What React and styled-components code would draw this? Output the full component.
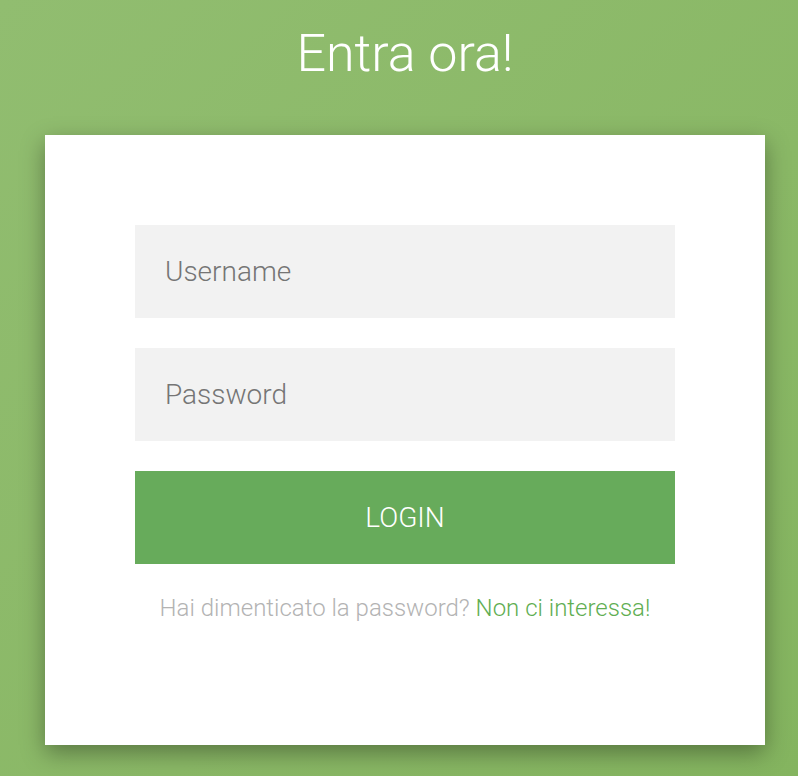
import React from 'react'
import styled, { createGlobalStyle } from 'styled-components'

const GlobalStyle = createGlobalStyle`
  html, body {
    margin: 0;
    padding: 0;
  }
  body {
    font-family: Roboto, "Liberation Sans", sans-serif;
    background: linear-gradient(135deg, #91bd70 0%, #8ab866 60%, #84b45f 100%);
    min-height: 776px;
  }
`

export default function App() {
  return (
    <>
      <GlobalStyle />
      <Page>
        <Title>Entra ora!</Title>
        <Card>
          <Form onSubmit={(e) => e.preventDefault()}>
            <Input type="text" placeholder="Username" />
            <Input type="password" placeholder="Password" />
            <Button type="submit">LOGIN</Button>
            <Message>
              Hai dimenticato la password? <Link href="#">Non ci interessa!</Link>
            </Message>
          </Form>
        </Card>
      </Page>
    </>
  )
}

const Page = styled.main`
  display: flex;
  flex-direction: column;
  align-items: center;
  padding-top: 25px;
  padding-left: 12px;
`

const Title = styled.h1`
  margin: 0;
  color: #fff;
  font-size: 52px;
  font-weight: 300;
  line-height: 58px;
`

const Card = styled.section`
  box-sizing: border-box;
  width: 720px;
  height: 610px;
  margin-top: 52px;
  background: #fff;
  padding: 90px;
  box-shadow: 0 8px 22px rgba(0, 0, 0, 0.35);
`

const Form = styled.form`
  display: flex;
  flex-direction: column;
  gap: 30px;
`

const Input = styled.input`
  box-sizing: border-box;
  width: 100%;
  height: 93px;
  border: none;
  outline: none;
  background: #f2f2f2;
  padding: 0 30px;
  font-family: Roboto, "Liberation Sans", sans-serif;
  font-size: 28px;
  font-weight: 300;
  color: #555;

  &::placeholder {
    color: #757575;
  }
`

const Button = styled.button`
  height: 93px;
  border: none;
  background: #67ab5b;
  color: #fff;
  font-family: Roboto, "Liberation Sans", sans-serif;
  font-size: 28px;
  font-weight: 300;
  cursor: pointer;
`

const Message = styled.p`
  margin: 0;
  text-align: center;
  color: #b3b3b3;
  font-size: 24px;
  font-weight: 300;
  line-height: 28px;
`

const Link = styled.a`
  color: #5fae52;
  text-decoration: none;
`
